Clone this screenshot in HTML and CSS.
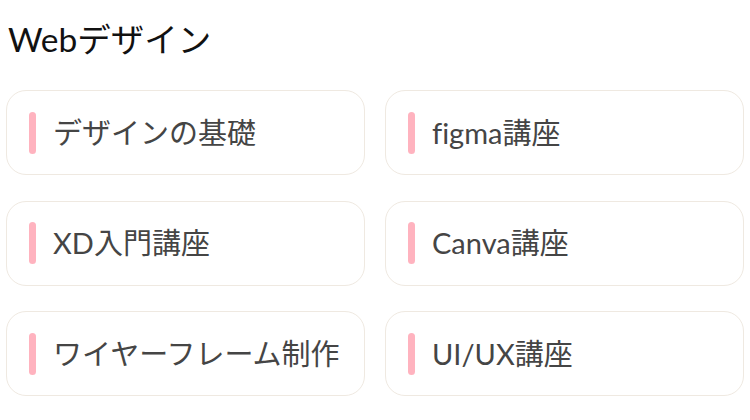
FILE: index.html
```html
<!DOCTYPE html>
<html lang="ja">
<head>
	<meta charset="utf-8">
	<title>Webデザイン</title>
	<link rel="stylesheet" href="styles.css">
</head>
<body>
<div class="section">
	<h2 class="section-title">Webデザイン</h2>
	<div class="course-list">
		<a class="course" href="#"><span class="course-name">デザインの基礎</span></a>
		<a class="course" href="#"><span class="course-name">figma講座</span></a>
		<a class="course" href="#"><span class="course-name">XD入門講座</span></a>
		<a class="course" href="#"><span class="course-name">Canva講座</span></a>
		<a class="course" href="#"><span class="course-name">ワイヤーフレーム制作</span></a>
		<a class="course" href="#"><span class="course-name">UI/UX講座</span></a>
	</div>
</div>
</body>
</html>
```

FILE: styles.css
```css
body{
	margin: 0;
	background-color: #fff;
	font-family: Lato, "Noto Sans CJK JP", sans-serif;
	font-variant-ligatures: none;
}
.section{
	padding: 0 6px;
}
.section-title{
	margin: 0;
	padding: 19px 0 0 2px;
	height: 90px;
	box-sizing: border-box;
	font-size: 33.5px;
	font-weight: 400;
	line-height: 40px;
	color: #111;
}
.course-list{
	display: grid;
	grid-template-columns: 1fr 1fr;
	column-gap: 20px;
	row-gap: 25.5px;
}
.course{
	display: flex;
	align-items: center;
	height: 85px;
	box-sizing: border-box;
	border: 1px solid #efe9e1;
	border-radius: 20px;
	background-color: #fff;
	padding-left: 22px;
	text-decoration: none;
	color: #454545;
}
.course::before{
	content: "";
	width: 7px;
	height: 42px;
	border-radius: 4px;
	background-color: #ffb3bf;
	margin-right: 17px;
	flex-shrink: 0;
}
.course-name{
	font-size: 29px;
	line-height: 40px;
	white-space: nowrap;
}
```
